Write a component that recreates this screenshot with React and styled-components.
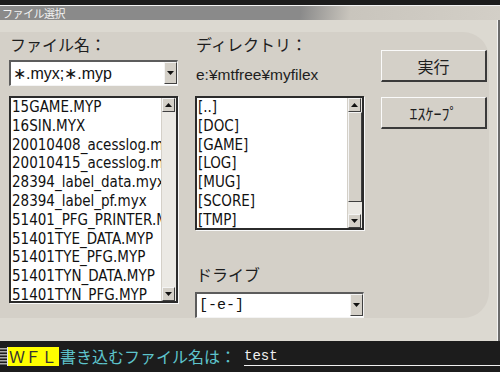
import React from 'react';
import styled, { createGlobalStyle } from 'styled-components';

const GlobalStyle = createGlobalStyle`
  html, body {
    margin: 0;
    padding: 0;
    background: #1c1c1c;
  }
  body {
    width: 500px;
    height: 372px;
    overflow: hidden;
  }
`;

const JP = `"Noto Sans CJK JP", "Noto Sans", sans-serif`;
const LATIN = `"Liberation Sans", "Noto Sans CJK JP", sans-serif`;
const NARROW = `"DejaVu Sans Condensed", "DejaVu Sans", sans-serif`;

// whole screen
const Screen = styled.div`
  width: 500px;
  height: 372px;
  display: flex;
  flex-direction: column;
  background: #1c1c1c;
  font-family: ${JP};
`;

const TopStrip = styled.div`
  flex: none;
  height: 5px;
  background: #1c1c1c;
  border-bottom: 1px solid #f2f2f2;
`;

const TitleBar = styled.div`
  flex: none;
  height: 14px;
  padding-left: 2px;
  background: linear-gradient(98deg, #8a8a8a 0%, #8a8a8a 60%, #c9c5bd 70%, #d3cfc7 100%);
  color: #f2f2f2;
  font-size: 11px;
  line-height: 14px;
  letter-spacing: -0.5px;
`;

// light frame round the rounded panel
const Main = styled.div`
  flex: 1;
  display: flex;
  padding: 12px 11px 23px 0;
  background: #dcd9d1;
  box-shadow: inset -2px 0 #6b6b6b, inset -3px 0 #f4f4f4;
`;

const Panel = styled.div`
  flex: 1;
  display: flex;
  gap: 17px;
  padding-left: 9px;
  background: #d4d0c8;
  border-radius: 0 26px 26px 0;
`;

const Column = styled.div`
  display: flex;
  flex-direction: column;
  width: ${p => p.$w}px;
`;

const Label = styled.div`
  height: 24px;
  margin-top: ${p => p.$top || 0}px;
  padding-left: 1px;
  font-size: 16px;
  line-height: 24px;
  color: #1e1e1e;
`;

const PathText = styled.div`
  height: 26px;
  margin-top: 4px;
  padding-left: 1px;
  font-family: ${LATIN};
  font-size: 15.5px;
  line-height: 30px;
  color: #1e1e1e;
`;

// combo box
const Combo = styled.div`
  display: flex;
  height: 26px;
  margin-top: ${p => p.$top}px;
  box-sizing: border-box;
  background: #fff;
  border-top: 2px solid #5c5c5c;
  border-left: 2px solid #5c5c5c;
  border-bottom: 1px solid #f4f4f4;
  border-right: 1px solid #f4f4f4;
`;

const ComboText = styled.div`
  flex: 1;
  padding-left: 2px;
  font-family: ${p => (p.$mono ? '"Liberation Mono", monospace' : LATIN)};
  font-size: ${p => (p.$mono ? 15 : 16)}px;
  line-height: 23px;
  color: #111;
`;

const ArrowButton = styled.div`
  flex: none;
  width: 13px;
  height: ${p => p.$h || 14}px;
  box-sizing: border-box;
  display: flex;
  align-items: center;
  justify-content: center;
  background: #d4d0c8;
  border-top: 1px solid #f4f4f4;
  border-left: 1px solid #f4f4f4;
  border-right: 1px solid #404040;
  border-bottom: 1px solid #404040;
`;

// list box
const ListBox = styled.div`
  display: flex;
  height: ${p => p.$h}px;
  margin-top: 10px;
  box-sizing: border-box;
  background: #fff;
  border: 2px solid #2b2b2b;
  box-shadow: 1px 1px 0 #f8f8f8;
`;

const Items = styled.div`
  flex: 1;
  overflow: hidden;
  padding-left: 1px;
  font-family: ${NARROW};
  font-stretch: condensed;
  font-size: 15px;
  line-height: 18.8px;
  color: #111;
  white-space: nowrap;
`;

const ScrollBar = styled.div`
  flex: none;
  width: 14px;
  display: flex;
  flex-direction: column;
  background: #ebe9e4;
  border-left: 1px solid #d4d0c8;
`;

const Thumb = styled.div`
  flex: none;
  height: ${p => p.$h}px;
  box-sizing: border-box;
  background: #d4d0c8;
  border-top: 1px solid #f4f4f4;
  border-left: 1px solid #f4f4f4;
  border-right: 1px solid #404040;
  border-bottom: 1px solid #404040;
`;

const Track = styled.div`
  flex: 1;
`;

const Button = styled.div`
  height: 32px;
  margin-top: ${p => p.$top}px;
  box-sizing: border-box;
  display: flex;
  align-items: center;
  justify-content: center;
  background: #d4d0c8;
  border-top: 1px solid #fafafa;
  border-left: 1px solid #fafafa;
  border-right: 2px solid #3a3a3a;
  border-bottom: 2px solid #3a3a3a;
  font-size: 16px;
  color: #1e1e1e;
`;

// prompt line at the bottom
const BottomBar = styled.div`
  flex: none;
  height: 36px;
  box-sizing: border-box;
  padding-top: 6px;
  background: #1c1c1c;
`;

const PromptRow = styled.div`
  display: flex;
  height: 19px;
  align-items: stretch;
`;

const Tag = styled.div`
  width: 51px;
  padding-left: 1px;
  box-sizing: border-box;
  background: #ffff00;
  color: #333;
  font-size: 16px;
  line-height: 19px;
`;

const Prompt = styled.div`
  padding-left: 1px;
  color: #5ec4cc;
  font-size: 16px;
  line-height: 19px;
  white-space: nowrap;
`;

const Entry = styled.div`
  flex: 1;
  margin-left: 8px;
  border-bottom: 1px solid #f0f0f0;
  color: #f0f0f0;
  font-family: "Liberation Mono", monospace;
  font-size: 14px;
  line-height: 19px;
`;

const Arrow = ({ up }) => (
  <svg width="7" height="4" viewBox="0 0 7 4">
    <path d={up ? 'M3.5 0L7 4H0Z' : 'M0 0H7L3.5 4Z'} fill="#111" />
  </svg>
);

const GripIcon = () => (
  <svg width="8" height="19" viewBox="0 0 8 19">
    {[1, 4, 7, 10, 13, 16].map(y => (
      <rect key={y} x="0" y={y} width="7" height="1.5" fill="#a8a8a8" />
    ))}
    <rect x="7" y="0" width="1" height="19" fill="#e8e8e8" />
  </svg>
);

const files = [
  '15GAME.MYP',
  '16SIN.MYX',
  '20010408_acesslog.myx',
  '20010415_acesslog.myx',
  '28394_label_data.myx',
  '28394_label_pf.myx',
  '51401_PFG_PRINTER.MYP',
  '51401TYE_DATA.MYP',
  '51401TYE_PFG.MYP',
  '51401TYN_DATA.MYP',
  '51401TYN_PFG.MYP',
];

const dirs = ['[..]', '[DOC]', '[GAME]', '[LOG]', '[MUG]', '[SCORE]', '[TMP]'];

const App = () => {
  return (
    <Screen>
      <GlobalStyle />
      <TopStrip />
      <TitleBar>ファイル選択</TitleBar>
      <Main>
        <Panel>
          <Column $w={169}>
            <Label>ファイル名：</Label>
            <Combo $top={4}>
              <ComboText>∗.myx;∗.myp</ComboText>
              <ArrowButton $h={22}><Arrow /></ArrowButton>
            </Combo>
            <ListBox $h={207}>
              <Items>
                {files.map(f => <div key={f}>{f}</div>)}
              </Items>
              <ScrollBar>
                <ArrowButton><Arrow up /></ArrowButton>
                <Track />
                <ArrowButton><Arrow /></ArrowButton>
              </ScrollBar>
            </ListBox>
          </Column>

          <Column $w={169}>
            <Label>ディレクトリ：</Label>
            <PathText>e:¥mtfree¥myfilex</PathText>
            <ListBox $h={134}>
              <Items>
                {dirs.map(d => <div key={d}>{d}</div>)}
              </Items>
              <ScrollBar>
                <ArrowButton><Arrow up /></ArrowButton>
                <Thumb $h={90} />
                <Track />
                <ArrowButton><Arrow /></ArrowButton>
              </ScrollBar>
            </ListBox>
            <Label $top={32}>ドライブ</Label>
            <Combo $top={6}>
              <ComboText $mono>[-e-]</ComboText>
              <ArrowButton $h={22}><Arrow /></ArrowButton>
            </Combo>
          </Column>

          <Column $w={106}>
            <Button $top={18}>実行</Button>
            <Button $top={15}>ｴｽｹｰﾌﾟ</Button>
          </Column>
        </Panel>
      </Main>
      <BottomBar>
        <PromptRow>
          <GripIcon />
          <Tag>ＷＦＬ</Tag>
          <Prompt>書き込むファイル名は：</Prompt>
          <Entry>test</Entry>
        </PromptRow>
      </BottomBar>
    </Screen>
  );
};

export default App;
